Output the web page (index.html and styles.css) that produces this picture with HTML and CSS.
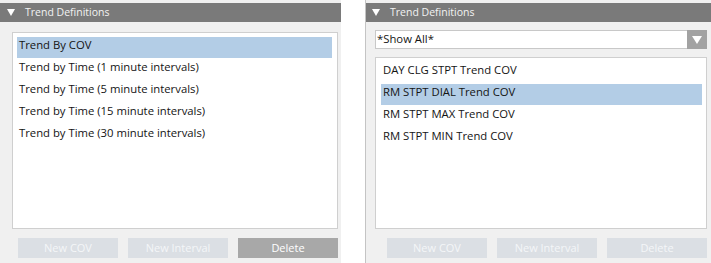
FILE: index.html
```html
<!DOCTYPE html>
<html>
<head>
<meta charset="utf-8">
<link rel="stylesheet" href="styles.css">
</head>
<body>
<div class="page">
  <section class="panel panel-left">
    <div class="panel-header"><span class="caret"></span><span class="title">Trend Definitions</span></div>
    <div class="panel-body">
      <ul class="list list-left">
        <li class="row selected">Trend By COV</li>
        <li class="row">Trend by Time (1 minute intervals)</li>
        <li class="row">Trend by Time (5 minute intervals)</li>
        <li class="row">Trend by Time (15 minute intervals)</li>
        <li class="row">Trend by Time (30 minute intervals)</li>
      </ul>
      <div class="buttons">
        <button class="btn">New COV</button>
        <button class="btn">New Interval</button>
        <button class="btn btn-active">Delete</button>
      </div>
    </div>
  </section>
  <section class="panel panel-right">
    <div class="panel-header"><span class="caret"></span><span class="title">Trend Definitions</span></div>
    <div class="panel-body">
      <div class="dropdown">
        <span class="dropdown-text">*Show All*</span>
        <span class="dropdown-btn"><span class="caret caret-small"></span></span>
      </div>
      <ul class="list list-right">
        <li class="row">DAY CLG STPT Trend COV</li>
        <li class="row selected">RM STPT DIAL Trend COV</li>
        <li class="row">RM STPT MAX Trend COV</li>
        <li class="row">RM STPT MIN Trend COV</li>
      </ul>
      <div class="buttons">
        <button class="btn">New COV</button>
        <button class="btn">New Interval</button>
        <button class="btn">Delete</button>
      </div>
    </div>
  </section>
</div>
</body>
</html>
```
FILE: styles.css
```css
html, body {
  margin: 0;
  padding: 0;
  background: #ffffff;
}
body {
  font-family: "Open Sans", "Noto Sans", sans-serif;
  font-size: 11.3px;
  color: #141414;
}
.page {
  display: flex;
  gap: 24px;
  height: 263px;
  overflow: hidden;
}
.panel {
  display: flex;
  flex-direction: column;
  background: #f0f0f0;
  padding-top: 3px;
  height: 260px;
}
.panel-left {
  width: 341px;
}
.panel-right {
  width: 345px;
  border-left: 1px solid #c4c4c4;
}
.panel-header {
  height: 19px;
  background: #7a7a7a;
  display: flex;
  align-items: center;
  color: #f2f2f2;
  flex-shrink: 0;
}
.caret {
  width: 0;
  height: 0;
  border-left: 4.5px solid transparent;
  border-right: 4.5px solid transparent;
  border-top: 7px solid #ffffff;
  margin-left: 7px;
  margin-right: 10px;
}
.panel-right .panel-header .caret {
  margin-left: 6px;
}
.title {
  line-height: 19px;
  font-size: 10.5px;
}
.panel-body {
  flex: 1;
  display: flex;
  flex-direction: column;
}
.panel-left .panel-body {
  padding: 10px 3px 0 12px;
}
.panel-right .panel-body {
  padding: 8px 4px 0 9px;
}
.list {
  list-style: none;
  margin: 0;
  background: #ffffff;
  border: 1px solid #cfcfcf;
  box-sizing: border-box;
}
.list-left {
  height: 197px;
  padding: 4px 5px 0 4px;
}
.list-right {
  height: 172px;
  padding: 4px 4px 0 5px;
  margin-top: 8px;
}
.row {
  height: 22px;
  box-sizing: border-box;
  padding: 0 0 0 2px;
  line-height: 16px;
  white-space: nowrap;
}
.row.selected {
  background: #b3cde6;
  height: 21px;
  margin-bottom: 1px;
}
.dropdown {
  display: flex;
  height: 19px;
  box-sizing: border-box;
  border: 1px solid #c8c8c8;
  background: #ffffff;
}
.dropdown-text {
  flex: 1;
  padding-left: 1px;
  line-height: 16px;
}
.dropdown-btn {
  width: 20px;
  margin: -1px -1px -1px 0;
  background: #a2a2a2;
  display: flex;
  align-items: center;
  justify-content: center;
}
.caret-small {
  margin: 0;
  border-left-width: 5px;
  border-right-width: 5px;
  border-top-width: 8px;
}
.buttons {
  display: flex;
  justify-content: flex-end;
  gap: 10px;
  margin-top: 9px;
}
.btn {
  width: 100px;
  height: 20px;
  border: none;
  padding: 0;
  background: #dbdfe4;
  color: #f4f6f8;
  font-family: inherit;
  font-size: 11px;
  line-height: 20px;
}
.btn-active {
  background: #a8a8a8;
  color: #ffffff;
}
```
